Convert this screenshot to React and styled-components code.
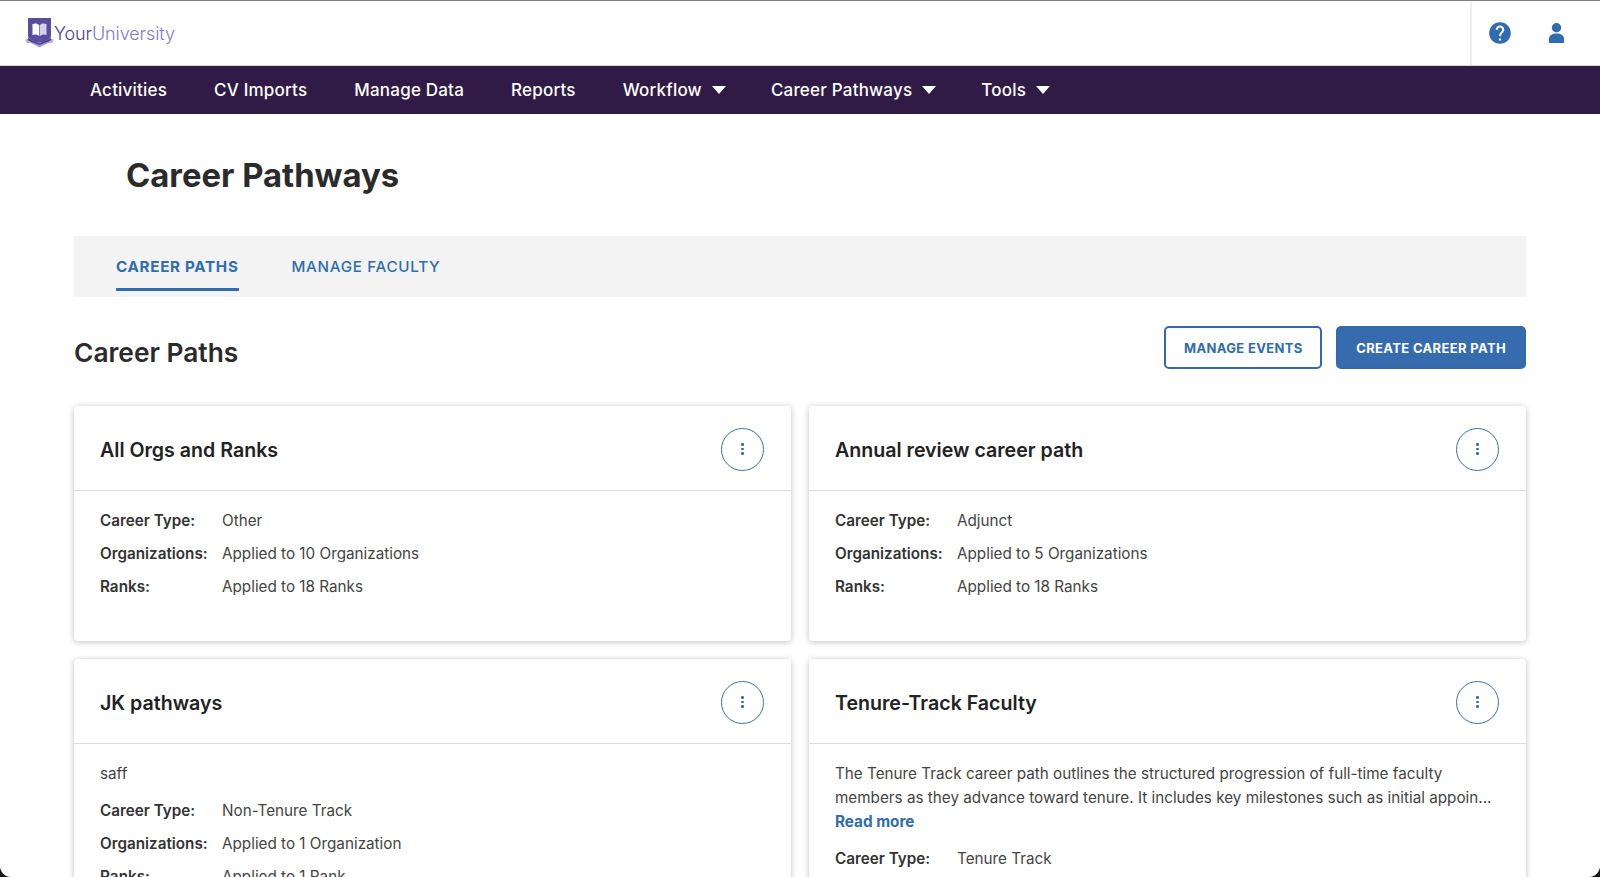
import styled, { createGlobalStyle } from "styled-components";
import { MdHelp } from "react-icons/md";

const GlobalStyle = createGlobalStyle`
  html, body {
    margin: 0;
    height: 100%;
    overflow: hidden;
    background: #111;
  }
  * {
    box-sizing: border-box;
  }
  body {
    font-family: Inter, "Liberation Sans", sans-serif;
    color: #2b2b2b;
  }
`;

const Page = styled.div`
  width: 1600px;
  height: 877px;
  overflow: hidden;
  background: #fff;
  border-top: 1px solid #7d7d7d;
  border-radius: 0 0 11px 11px;
`;

const TopBar = styled.header`
  height: 64px;
  display: flex;
  align-items: center;
  justify-content: space-between;
  padding-left: 25px;
`;

const Logo = styled.div`
  display: flex;
  align-items: center;
  gap: 0;
  font-size: 18px;
  font-weight: 300;
  letter-spacing: -0.1px;
`;

const LogoDark = styled.span`
  color: #4d3f8f;
`;

const LogoLight = styled.span`
  color: #8379c9;
`;

const TopActions = styled.div`
  height: 100%;
  width: 130px;
  display: flex;
  align-items: center;
  gap: 36px;
  padding-left: 15px;
  border-left: 2px solid #efefef;
  color: #2f6cb0;
`;

const Nav = styled.nav`
  height: 49px;
  display: flex;
  align-items: center;
  gap: 47px;
  padding-left: 90px;
  background: #2f1b45;
  border-top: 1px solid #d8d8d8;
`;

const NavItem = styled.a`
  display: flex;
  align-items: center;
  gap: 10px;
  color: #fff;
  font-size: 17px;
  font-weight: 500;
  letter-spacing: 0.2px;
`;

const Caret = styled.span`
  width: 0;
  height: 0;
  margin-right: -2px;
  border-left: 7px solid transparent;
  border-right: 7px solid transparent;
  border-top: 8px solid #fff;
`;

const Content = styled.main`
  padding: 0 74px;
`;

const PageTitle = styled.h1`
  margin: 0;
  padding: 40px 0 0 52px;
  height: 122px;
  font-size: 32.85px;
  line-height: 42px;
  font-weight: 700;
  color: #2b2b2b;
`;

const Tabs = styled.div`
  height: 61px;
  display: flex;
  gap: 53px;
  padding-left: 42px;
  background: #f3f3f3;
`;

const Tab = styled.a`
  display: flex;
  align-items: center;
  height: 55px;
  padding-top: 8px;
  font-size: 15.2px;
  font-weight: ${({ $active }) => ($active ? 700 : 500)};
  letter-spacing: 0.7px;
  color: #2f6cb0;
  border-bottom: 3px solid ${({ $active }) => ($active ? "#2f6cb0" : "transparent")};
`;

const SectionHead = styled.div`
  height: 109px;
  display: flex;
  justify-content: space-between;
  align-items: flex-start;
  padding-top: 29px;
`;

const SectionTitle = styled.h2`
  margin: 10px 0 0;
  font-size: 26.3px;
  line-height: 34px;
  font-weight: 600;
  color: #2b2b2b;
`;

const Buttons = styled.div`
  display: flex;
  gap: 14px;
`;

const Button = styled.button`
  height: 43px;
  padding: 0 ${({ $primary }) => ($primary ? "18px" : "17.5px")};
  border-radius: 5px;
  border: 2px solid #336aad;
  background: ${({ $primary }) => ($primary ? "#366cad" : "#fff")};
  color: ${({ $primary }) => ($primary ? "#fff" : "#2f6cb0")};
  font-family: inherit;
  font-size: 13px;
  font-weight: 700;
  letter-spacing: 0.35px;
`;

const CardGrid = styled.div`
  display: grid;
  grid-template-columns: 1fr 1fr;
  gap: 18px;
`;

const Card = styled.section`
  height: ${({ $tall }) => ($tall ? "300px" : "235px")};
  background: #fff;
  border-radius: 4px;
  box-shadow: 0 1px 6px rgba(0, 0, 0, 0.25);
`;

const CardHead = styled.div`
  height: 85px;
  display: flex;
  align-items: center;
  justify-content: space-between;
  padding: 2px 27px 0 26px;
  border-bottom: 1px solid #dcdcdc;
`;

const CardTitle = styled.h3`
  margin: 2px 0 0;
  font-size: 19.6px;
  font-weight: 600;
  color: #222;
`;

const MenuButton = styled.button`
  width: 43px;
  height: 43px;
  display: flex;
  flex-direction: column;
  align-items: center;
  justify-content: center;
  gap: 2px;
  padding: 0;
  border: 1px solid #3a70b2;
  border-radius: 50%;
  background: #fff;
`;

const Dot = styled.span`
  width: 2.5px;
  height: 2.5px;
  border-radius: 50%;
  background: #2f6cb0;
`;

const CardBody = styled.div`
  padding: 13px 26px 0;
  font-size: 15.25px;
  color: #444;
`;

const Description = styled.p`
  margin: 5px 0 8px;
  line-height: 24px;
`;

const ReadMore = styled.a`
  display: block;
  font-weight: 700;
  color: #2f6cb0;
`;

const Row = styled.div`
  height: 33px;
  display: flex;
  align-items: center;
`;

const Label = styled.span`
  width: 122px;
  font-weight: 600;
  color: #333;
`;

const cards = [
  {
    title: "All Orgs and Ranks",
    rows: [
      ["Career Type:", "Other"],
      ["Organizations:", "Applied to 10 Organizations"],
      ["Ranks:", "Applied to 18 Ranks"],
    ],
  },
  {
    title: "Annual review career path",
    rows: [
      ["Career Type:", "Adjunct"],
      ["Organizations:", "Applied to 5 Organizations"],
      ["Ranks:", "Applied to 18 Ranks"],
    ],
  },
  {
    title: "JK pathways",
    tall: true,
    description: "saff",
    rows: [
      ["Career Type:", "Non-Tenure Track"],
      ["Organizations:", "Applied to 1 Organization"],
      ["Ranks:", "Applied to 1 Rank"],
    ],
  },
  {
    title: "Tenure-Track Faculty",
    tall: true,
    description:
      "The Tenure Track career path outlines the structured progression of full-time faculty members as they advance toward tenure. It includes key milestones such as initial appoin...",
    more: true,
    rows: [["Career Type:", "Tenure Track"]],
  },
];

const LogoMark = () => (
  <svg width="29" height="30" viewBox="0 0 29 30">
    <path d="M3 21l-3 .5 2 3.500h25l2-3.500-3-.5z" fill="#b3abe2" />
    <path d="M3 0h23v18c0 3-5 5-11.500 7.500C8 23 3 21 3 18z" fill="#5a4d9e" />
    <path d="M5 24.500h19l-9.500 5z" fill="#a59cdc" />
    <path d="M3 19c1 2.500 6 4 11.500 6.500C20 23 25 21.500 26 19v3c-2 2-7 3-11.500 5C10 25 5 24 3 22z" fill="#4c4090" />
    <path d="M7.500 6c3-1 5-.5 6.700 1v11c-2-1.500-4-2-6.700-1z" fill="#fff" />
    <path d="M21.500 6c-3-1-5-.5-6.700 1v11c2-1.500 4-2 6.700-1z" fill="#d5d0f0" />
  </svg>
);

const UserIcon = () => (
  <svg width="15" height="20" viewBox="0 0 15 20" fill="currentColor">
    <circle cx="7.5" cy="4.7" r="4.7" />
    <path d="M0 20v-4.500c0-3 3.300-5 7.500-5s7.500 2 7.500 5V20z" />
  </svg>
);

const App = () => {
  return (
    <Page>
      <GlobalStyle />
      <TopBar>
        <Logo>
          <LogoMark />
          <span>
            <LogoDark>Your</LogoDark>
            <LogoLight>University</LogoLight>
          </span>
        </Logo>
        <TopActions>
          <MdHelp size={26} />
          <UserIcon />
        </TopActions>
      </TopBar>
      <Nav>
        <NavItem>Activities</NavItem>
        <NavItem>CV Imports</NavItem>
        <NavItem>Manage Data</NavItem>
        <NavItem>Reports</NavItem>
        <NavItem>
          Workflow <Caret />
        </NavItem>
        <NavItem>
          Career Pathways <Caret />
        </NavItem>
        <NavItem>
          Tools <Caret />
        </NavItem>
      </Nav>
      <Content>
        <PageTitle>Career Pathways</PageTitle>
        <Tabs>
          <Tab $active>CAREER PATHS</Tab>
          <Tab>MANAGE FACULTY</Tab>
        </Tabs>
        <SectionHead>
          <SectionTitle>Career Paths</SectionTitle>
          <Buttons>
            <Button>MANAGE EVENTS</Button>
            <Button $primary>CREATE CAREER PATH</Button>
          </Buttons>
        </SectionHead>
        <CardGrid>
          {cards.map((card) => (
            <Card key={card.title} $tall={card.tall}>
              <CardHead>
                <CardTitle>{card.title}</CardTitle>
                <MenuButton>
                  <Dot />
                  <Dot />
                  <Dot />
                </MenuButton>
              </CardHead>
              <CardBody>
                {card.description && (
                  <Description>
                    {card.description}
                    {card.more && <ReadMore>Read more</ReadMore>}
                  </Description>
                )}
                {card.rows.map(([label, value]) => (
                  <Row key={label}>
                    <Label>{label}</Label>
                    <span>{value}</span>
                  </Row>
                ))}
              </CardBody>
            </Card>
          ))}
        </CardGrid>
      </Content>
    </Page>
  );
};

export default App;
